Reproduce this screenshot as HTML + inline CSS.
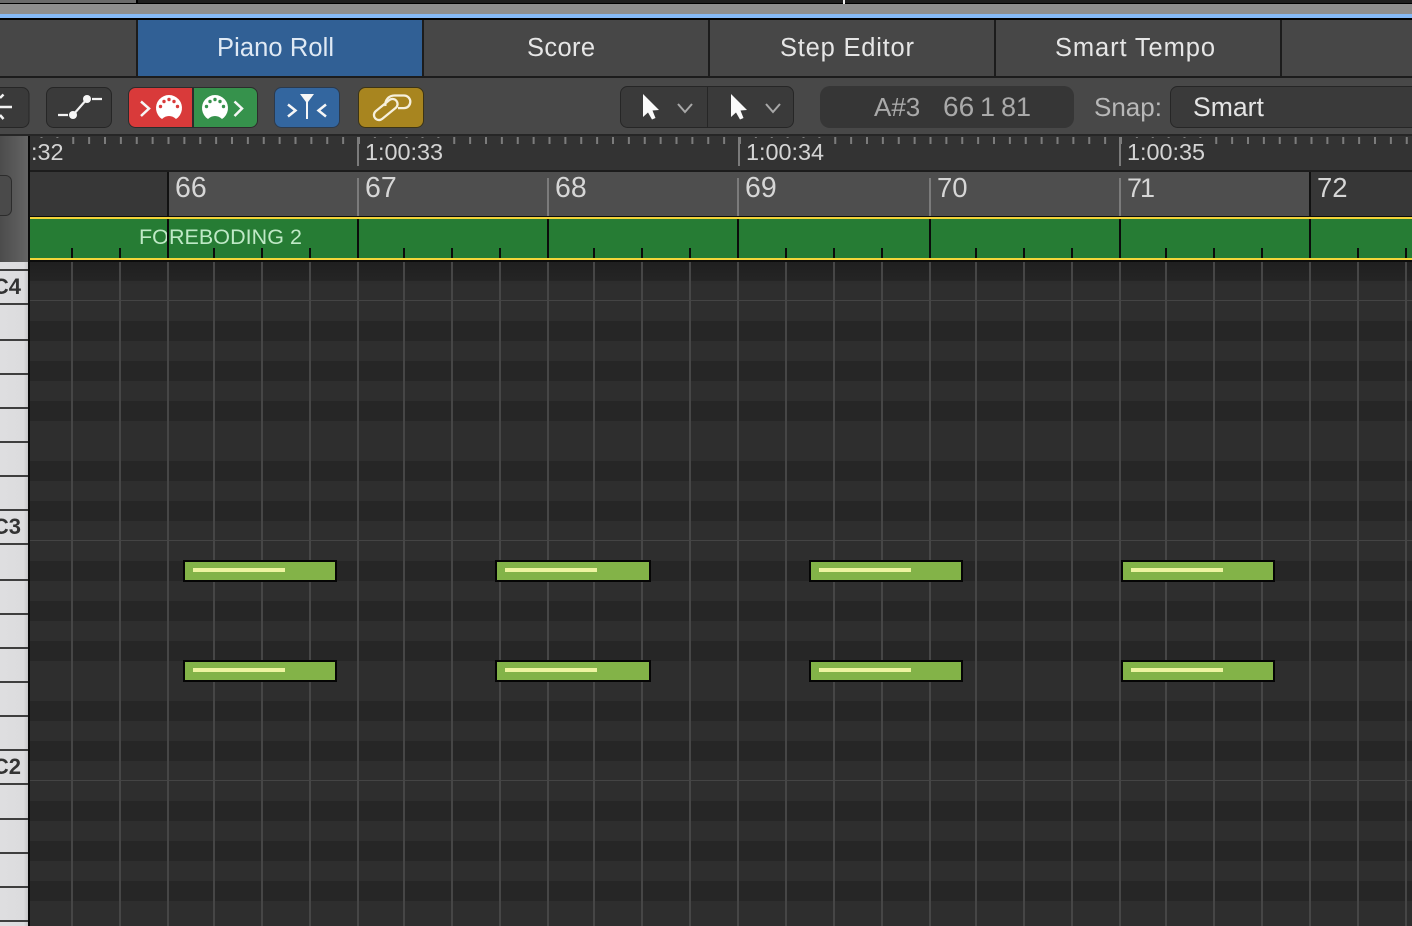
<!DOCTYPE html>
<html>
<head>
<meta charset="utf-8">
<style>
html,body{margin:0;padding:0;background:#2c2c2c;width:1412px;height:926px;overflow:hidden}
svg{display:block;font-family:"Liberation Sans",sans-serif;filter:blur(.35px)}
</style>
</head>
<body>
<svg width="1412" height="926" viewBox="0 0 1412 926" xmlns="http://www.w3.org/2000/svg">
<defs>
<pattern id="rows" x="0" y="61" width="1412" height="240" patternUnits="userSpaceOnUse">
<rect width="1412" height="240" fill="#2e2e2e"/>
<rect y="20" width="1412" height="20" fill="#262626"/>
<rect y="60" width="1412" height="20" fill="#262626"/>
<rect y="100" width="1412" height="20" fill="#262626"/>
<rect y="160" width="1412" height="20" fill="#262626"/>
<rect y="200" width="1412" height="20" fill="#262626"/>
<rect y="239" width="1412" height="2" fill="#444"/>
</pattern>
<linearGradient id="leftcol" x1="0" y1="0" x2="1" y2="0"><stop offset="0" stop-color="#4c4c4c"/><stop offset="1" stop-color="#646464"/></linearGradient>
<linearGradient id="keys" x1="0" y1="0" x2="1" y2="0"><stop offset="0" stop-color="#dedee0"/><stop offset=".85" stop-color="#dcdcde"/><stop offset="1" stop-color="#c6c6c8"/></linearGradient>
<linearGradient id="topshade" x1="0" y1="0" x2="0" y2="1"><stop offset="0" stop-color="#000" stop-opacity=".18"/><stop offset="1" stop-color="#000" stop-opacity="0"/></linearGradient>
</defs>

<!-- top strip -->
<rect width="1412" height="20" fill="#000"/>
<rect x="0" y="0" width="136" height="3" fill="#6a6a6a"/>
<rect x="138" y="0" width="1274" height="3" fill="#1f1f1f"/>
<rect x="843" y="0" width="2" height="4" fill="#eee"/>
<rect x="0" y="4" width="1412" height="10" fill="#8e8e8e"/>
<rect x="0" y="14" width="1412" height="4" fill="#85b9f6"/>

<!-- tabs -->
<rect x="0" y="20" width="1412" height="56" fill="#474747"/>
<rect x="138" y="20" width="285" height="56" fill="#316095"/>
<rect x="0" y="76" width="1412" height="2" fill="#1c1c1c"/>
<g fill="#1c1c1c">
<rect x="136" y="20" width="2" height="56"/>
<rect x="422" y="20" width="2" height="56"/>
<rect x="708" y="20" width="2" height="56"/>
<rect x="994" y="20" width="2" height="56"/>
<rect x="1280" y="20" width="2" height="56"/>
</g>
<g font-size="25.500" fill="#e6e6e6">
<text x="217" y="56" fill="#dfe9f4" textLength="117" lengthAdjust="spacing">Piano Roll</text>
<text x="527" y="56" textLength="68" lengthAdjust="spacing">Score</text>
<text x="780" y="56" textLength="134" lengthAdjust="spacing">Step Editor</text>
<text x="1055" y="56" textLength="160" lengthAdjust="spacing">Smart Tempo</text>
</g>

<!-- toolbar -->
<rect x="0" y="78" width="1412" height="57" fill="#484848"/>
<g fill="#3a3a3a" stroke="#262626" stroke-width="1">
<rect x="-12" y="87.500" width="41" height="40" rx="7"/>
<rect x="46.500" y="87.500" width="65" height="40" rx="7"/>
<rect x="620.500" y="86.500" width="173" height="41" rx="7"/>
<rect x="1170.500" y="86.500" width="260" height="41" rx="7"/>
</g>
<rect x="820" y="86" width="254" height="42" rx="10" fill="#363636"/>
<rect x="707" y="87" width="1" height="40" fill="#262626"/>

<!-- first partial icon -->
<path d="M0 107H12M0 98L3.500 94.500M0 115L3.500 119" stroke="#f2f2f2" stroke-width="2.500" fill="none"/>
<!-- automation icon -->
<path d="M58 115H68M73 115L87 99M92 99H102" stroke="#f2f2f2" stroke-width="2.200" fill="none"/>
<circle cx="73" cy="115" r="4" fill="#f6f6f6"/><circle cx="87" cy="99" r="4" fill="#f6f6f6"/>

<!-- MIDI red / green -->
<path d="M135.500 87.500H192.500V127.500H135.500a7 7 0 0 1-7-7V94.500a7 7 0 0 1 7-7z" fill="#d93a3a" stroke="#2c2c2c"/>
<path d="M193.500 87.500H250.500a7 7 0 0 1 7 7V120.500a7 7 0 0 1-7 7H193.500z" fill="#36924c" stroke="#2c2c2c"/>
<rect x="192" y="88" width="1.500" height="39" fill="#2c2c2c"/>
<path d="M141 101.500L149 108.500L141 116" fill="none" stroke="#f6f6f6" stroke-width="2.500"/>
<path d="M234.500 101.500L242 108.500L234.500 116" fill="none" stroke="#f6f6f6" stroke-width="2.500"/>
<path d="M162 119A13 13 0 1 1 176 119Q173 116 169 116Q165 116 162 119Z" fill="#fff"/>
<path d="M208 119A13 13 0 1 1 222 119Q219 116 215 116Q211 116 208 119Z" fill="#fff"/>
<g fill="#d93a3a">
<circle cx="160.500" cy="106.500" r="1.700"/><circle cx="164" cy="101.500" r="1.700"/><circle cx="169" cy="99.500" r="1.700"/><circle cx="174" cy="101.500" r="1.700"/><circle cx="177.500" cy="106.500" r="1.700"/>
</g>
<g fill="#36924c">
<circle cx="206.500" cy="106.500" r="1.700"/><circle cx="210" cy="101.500" r="1.700"/><circle cx="215" cy="99.500" r="1.700"/><circle cx="220" cy="101.500" r="1.700"/><circle cx="223.500" cy="106.500" r="1.700"/>
</g>

<!-- blue filter button -->
<rect x="274.500" y="87.500" width="65" height="40" rx="7" fill="#33669f" stroke="#2c3a4c"/>
<path d="M300 94H314L308 102V119H306V102Z" fill="#f6f6f6"/>
<path d="M288 104.500L295.500 110.500L288 116.500M326 104.500L318.500 110.500L326 116.500" fill="none" stroke="#f6f6f6" stroke-width="2.500"/>

<!-- gold link button -->
<rect x="358.500" y="87.500" width="65" height="40" rx="7" fill="#a8851f" stroke="#3c3416"/>
<g fill="none" stroke="#f6f0dc" stroke-width="2.300">
<path d="M385.500 106C384.500 100 389 95.500 394.500 95.500H404A6.300 6.300 0 0 1 404 108.100H398"/>
<path d="M389.300 100.100L375.800 111.100A5 5 0 0 0 382.200 118.900L395.700 107.900A5 5 0 0 0 389.300 100.100"/>
</g>

<!-- cursor tools -->
<g fill="#fafafa">
<path d="M643 94V117L648 112.500L652 119.500L655.500 118L652.500 110.500L659 110Z"/>
<path d="M731 94V117L736 112.500L740 119.500L743.500 118L740.500 110.500L747 110Z"/>
</g>
<path d="M678 104L685 112L692 104M766 104L773 112L780 104" fill="none" stroke="#a8a8a8" stroke-width="2"/>

<!-- display -->
<g font-size="26" fill="#a9a9a9">
<text x="874" y="116">A#3</text>
<text x="943" y="116" font-size="28">66</text>
<text x="980" y="116" font-size="27">1</text>
<text x="1001" y="116" font-size="27">81</text>
<text x="1094" y="116" fill="#b8b8b8">Snap:</text>
<text x="1193" y="116" fill="#e4e4e4" font-size="26.600">Smart</text>
</g>

<!-- time ruler -->
<rect x="0" y="134" width="1412" height="2" fill="#262626"/>
<rect x="30" y="136" width="1382" height="34" fill="#333"/>
<path d="M30 140.500H1412" stroke="#7c7c7c" stroke-width="7" stroke-dasharray="2 13.875" stroke-dashoffset="-10.500" fill="none"/>
<g fill="#333">
<rect x="362" y="138" width="84" height="24"/>
<rect x="743" y="138" width="84" height="24"/>
<rect x="1124" y="138" width="84" height="24"/>
<rect x="30" y="138" width="36" height="24"/>
</g>
<g fill="#7b7b7b">
<rect x="357" y="137" width="2" height="29"/>
<rect x="738" y="137" width="2" height="29"/>
<rect x="1119" y="137" width="2" height="29"/>
</g>
<g font-size="23.400" fill="#d4d4d4">
<text x="31" y="160">:32</text>
<text x="365" y="160">1:00:33</text>
<text x="746" y="160">1:00:34</text>
<text x="1127" y="160">1:00:35</text>
</g>
<rect x="30" y="170" width="1382" height="2" fill="#1c1c1c"/>

<!-- bar ruler -->
<rect x="30" y="172" width="1382" height="44" fill="#373737"/>
<rect x="169" y="172" width="1141" height="44" fill="#4e4e4e"/>
<rect x="167" y="172" width="2" height="44" fill="#111"/>
<rect x="1309" y="172" width="2" height="44" fill="#111"/>
<g fill="#7b7b7b">
<rect x="357" y="178" width="2" height="38"/>
<rect x="547" y="178" width="2" height="38"/>
<rect x="737" y="178" width="2" height="38"/>
<rect x="929" y="178" width="2" height="38"/>
<rect x="1119" y="178" width="2" height="38"/>
</g>
<g font-size="28.500" fill="#d6d6d6">
<text x="175" y="197">66</text>
<text x="365" y="197">67</text>
<text x="555" y="197">68</text>
<text x="745" y="197">69</text>
<text x="937" y="197" font-size="27.500">70</text>
<text x="1127" y="197" font-size="27" textLength="28" lengthAdjust="spacing">71</text>
<text x="1317" y="197" font-size="27.500">72</text>
</g>

<!-- region lane -->
<rect x="30" y="216" width="1382" height="46" fill="#0c0c0c"/>
<rect x="30" y="217" width="1382" height="2" fill="#f3d53a"/>
<rect x="30" y="219" width="1382" height="39" fill="#267c34"/>
<rect x="30" y="258" width="1382" height="2" fill="#f3d53a"/>
<text x="139" y="244" font-size="21.500" fill="#bfe9c6" textLength="163" lengthAdjust="spacing">FOREBODING 2</text>
<path d="M168 219V258M358 219V258M548 219V258M738 219V258M930 219V258M1120 219V258M1310 219V258" stroke="#0b0b0b" stroke-width="2"/>
<path d="M72 248V258M120 248V258M214 248V258M262 248V258M310 248V258M404 248V258M452 248V258M500 248V258M594 248V258M642 248V258M690 248V258M786 248V258M834 248V258M882 248V258M976 248V258M1024 248V258M1072 248V258M1166 248V258M1214 248V258M1262 248V258M1358 248V258M1406 248V258" stroke="#0b0b0b" stroke-width="2"/>

<!-- grid -->
<rect x="30" y="262" width="1382" height="664" fill="url(#rows)"/>
<rect x="30" y="262" width="1382" height="24" fill="url(#topshade)"/>
<path d="M72 262V926M120 262V926M168 262V926M214 262V926M262 262V926M310 262V926M358 262V926M404 262V926M452 262V926M500 262V926M548 262V926M594 262V926M642 262V926M690 262V926M738 262V926M786 262V926M834 262V926M882 262V926M930 262V926M976 262V926M1024 262V926M1072 262V926M1120 262V926M1166 262V926M1214 262V926M1262 262V926M1310 262V926M1358 262V926M1406 262V926" stroke="#464646" stroke-width="2"/>

<!-- notes -->
<g fill="#83b348" stroke="#050505" stroke-width="2">
<rect x="184" y="561" width="152" height="20"/><rect x="496" y="561" width="154" height="20"/><rect x="810" y="561" width="152" height="20"/><rect x="1122" y="561" width="152" height="20"/>
<rect x="184" y="661" width="152" height="20"/><rect x="496" y="661" width="154" height="20"/><rect x="810" y="661" width="152" height="20"/><rect x="1122" y="661" width="152" height="20"/>
</g>
<g fill="#eef4a0">
<rect x="193" y="568" width="92" height="4"/><rect x="505" y="568" width="92" height="4"/><rect x="819" y="568" width="92" height="4"/><rect x="1131" y="568" width="92" height="4"/>
<rect x="193" y="668" width="92" height="4"/><rect x="505" y="668" width="92" height="4"/><rect x="819" y="668" width="92" height="4"/><rect x="1131" y="668" width="92" height="4"/>
</g>

<!-- left column -->
<rect x="0" y="136" width="28" height="126" fill="url(#leftcol)"/>
<rect x="-10" y="175.500" width="21.500" height="40" rx="6" fill="#4a4a4a" stroke="#2c2c2c"/>
<rect x="0" y="262" width="28" height="664" fill="url(#keys)"/>
<g fill="#3e3e3e">
<rect y="269" width="28" height="2"/><rect y="303" width="28" height="2"/><rect y="339" width="28" height="2"/><rect y="373" width="28" height="2"/><rect y="407" width="28" height="2"/><rect y="441" width="28" height="2"/><rect y="475" width="28" height="2"/><rect y="509" width="28" height="2"/><rect y="543" width="28" height="2"/><rect y="579" width="28" height="2"/><rect y="613" width="28" height="2"/><rect y="647" width="28" height="2"/><rect y="681" width="28" height="2"/><rect y="715" width="28" height="2"/><rect y="749" width="28" height="2"/><rect y="783" width="28" height="2"/><rect y="818" width="28" height="2"/><rect y="852" width="28" height="2"/><rect y="886" width="28" height="2"/><rect y="920" width="28" height="2"/>
</g>
<g font-size="22" font-weight="bold" fill="#333" text-anchor="end">
<text x="21" y="294">C4</text>
<text x="21" y="534">C3</text>
<text x="21" y="774">C2</text>
</g>
<rect x="28" y="136" width="2" height="790" fill="#0a0a0a"/>
</svg>
</body>
</html>
